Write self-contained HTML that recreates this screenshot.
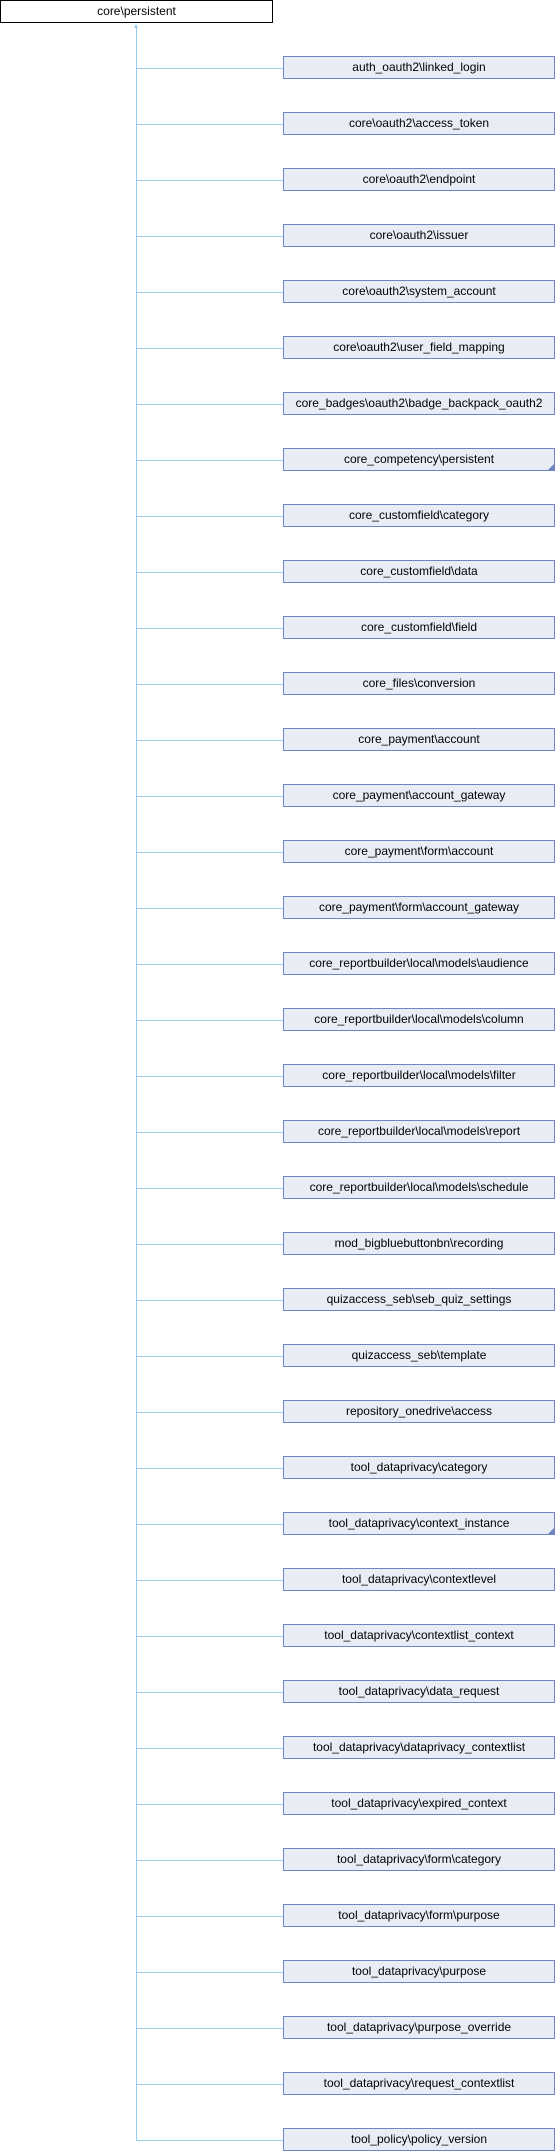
<!DOCTYPE html>
<html><head><meta charset="utf-8"><style>
body{margin:0;width:556px;height:2152px;background:#fff;position:relative;overflow:hidden;font-family:"Liberation Sans",Arial,sans-serif;}
.b{position:absolute;left:283px;width:270px;height:21px;background:#e8ecf5;border:1px solid #6f86c3;font-size:12px;line-height:21px;text-align:center;color:#000;white-space:nowrap;}
.r{position:absolute;left:0;top:0;width:271px;height:21px;border:1px solid #000;font-size:12px;line-height:21px;text-align:center;background:#fff;}
.h{position:absolute;left:136px;width:147px;height:1px;background:#98cdee;}
.v{position:absolute;left:136px;width:1px;top:26px;height:2114px;background:#98cdee;}
.c{position:absolute;right:0;bottom:0;width:0;height:0;border-left:6px solid transparent;border-bottom:6px solid #6f86c3;}
.a{position:absolute;left:134px;top:24px;width:0;height:0;border-left:2.5px solid transparent;border-right:2.5px solid transparent;border-bottom:4px solid #98cdee;}
</style></head><body>
<div class="r">core\persistent</div>
<div class="v"></div><div class="a"></div>
<div class="h" style="top:68px"></div><div class="b" style="top:56px">auth_oauth2\linked_login</div>
<div class="h" style="top:124px"></div><div class="b" style="top:112px">core\oauth2\access_token</div>
<div class="h" style="top:180px"></div><div class="b" style="top:168px">core\oauth2\endpoint</div>
<div class="h" style="top:236px"></div><div class="b" style="top:224px">core\oauth2\issuer</div>
<div class="h" style="top:292px"></div><div class="b" style="top:280px">core\oauth2\system_account</div>
<div class="h" style="top:348px"></div><div class="b" style="top:336px">core\oauth2\user_field_mapping</div>
<div class="h" style="top:404px"></div><div class="b" style="top:392px">core_badges\oauth2\badge_backpack_oauth2</div>
<div class="h" style="top:460px"></div><div class="b" style="top:448px">core_competency\persistent<div class="c"></div></div>
<div class="h" style="top:516px"></div><div class="b" style="top:504px">core_customfield\category</div>
<div class="h" style="top:572px"></div><div class="b" style="top:560px">core_customfield\data</div>
<div class="h" style="top:628px"></div><div class="b" style="top:616px">core_customfield\field</div>
<div class="h" style="top:684px"></div><div class="b" style="top:672px">core_files\conversion</div>
<div class="h" style="top:740px"></div><div class="b" style="top:728px">core_payment\account</div>
<div class="h" style="top:796px"></div><div class="b" style="top:784px">core_payment\account_gateway</div>
<div class="h" style="top:852px"></div><div class="b" style="top:840px">core_payment\form\account</div>
<div class="h" style="top:908px"></div><div class="b" style="top:896px">core_payment\form\account_gateway</div>
<div class="h" style="top:964px"></div><div class="b" style="top:952px">core_reportbuilder\local\models\audience</div>
<div class="h" style="top:1020px"></div><div class="b" style="top:1008px">core_reportbuilder\local\models\column</div>
<div class="h" style="top:1076px"></div><div class="b" style="top:1064px">core_reportbuilder\local\models\filter</div>
<div class="h" style="top:1132px"></div><div class="b" style="top:1120px">core_reportbuilder\local\models\report</div>
<div class="h" style="top:1188px"></div><div class="b" style="top:1176px">core_reportbuilder\local\models\schedule</div>
<div class="h" style="top:1244px"></div><div class="b" style="top:1232px">mod_bigbluebuttonbn\recording</div>
<div class="h" style="top:1300px"></div><div class="b" style="top:1288px">quizaccess_seb\seb_quiz_settings</div>
<div class="h" style="top:1356px"></div><div class="b" style="top:1344px">quizaccess_seb\template</div>
<div class="h" style="top:1412px"></div><div class="b" style="top:1400px">repository_onedrive\access</div>
<div class="h" style="top:1468px"></div><div class="b" style="top:1456px">tool_dataprivacy\category</div>
<div class="h" style="top:1524px"></div><div class="b" style="top:1512px">tool_dataprivacy\context_instance<div class="c"></div></div>
<div class="h" style="top:1580px"></div><div class="b" style="top:1568px">tool_dataprivacy\contextlevel</div>
<div class="h" style="top:1636px"></div><div class="b" style="top:1624px">tool_dataprivacy\contextlist_context</div>
<div class="h" style="top:1692px"></div><div class="b" style="top:1680px">tool_dataprivacy\data_request</div>
<div class="h" style="top:1748px"></div><div class="b" style="top:1736px">tool_dataprivacy\dataprivacy_contextlist</div>
<div class="h" style="top:1804px"></div><div class="b" style="top:1792px">tool_dataprivacy\expired_context</div>
<div class="h" style="top:1860px"></div><div class="b" style="top:1848px">tool_dataprivacy\form\category</div>
<div class="h" style="top:1916px"></div><div class="b" style="top:1904px">tool_dataprivacy\form\purpose</div>
<div class="h" style="top:1972px"></div><div class="b" style="top:1960px">tool_dataprivacy\purpose</div>
<div class="h" style="top:2028px"></div><div class="b" style="top:2016px">tool_dataprivacy\purpose_override</div>
<div class="h" style="top:2084px"></div><div class="b" style="top:2072px">tool_dataprivacy\request_contextlist</div>
<div class="h" style="top:2140px"></div><div class="b" style="top:2128px">tool_policy\policy_version</div>
</body></html>
